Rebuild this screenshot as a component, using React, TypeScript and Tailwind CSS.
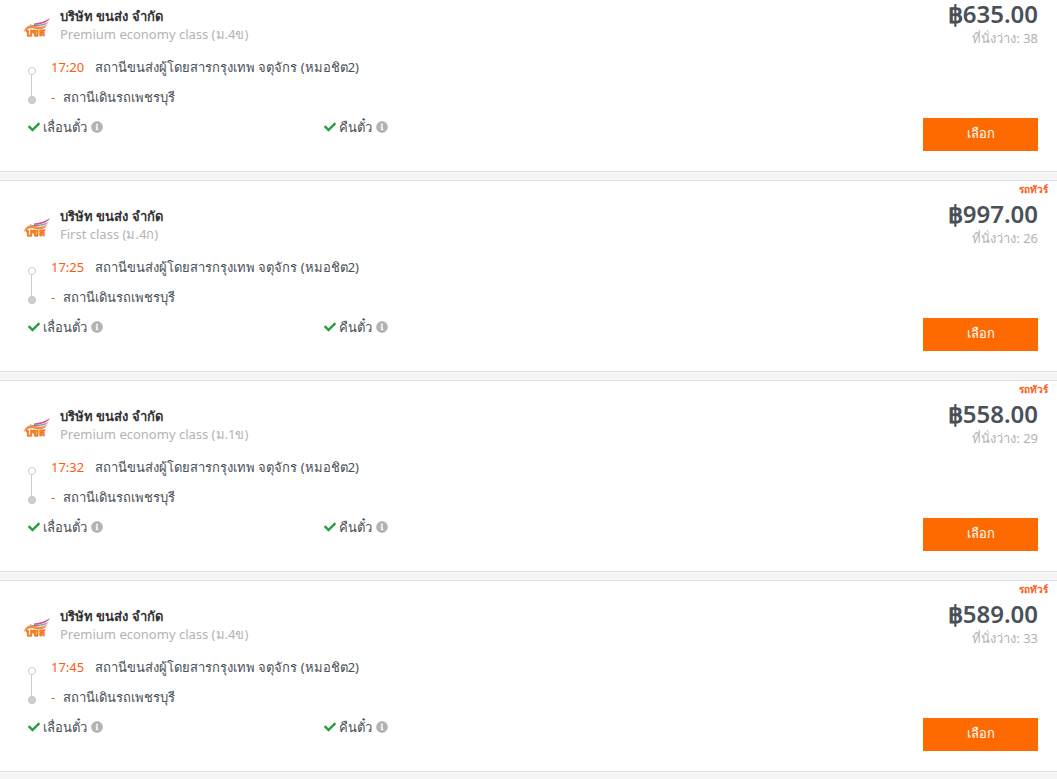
import { FaCheck, FaInfoCircle } from 'react-icons/fa'

type Trip = {
  departs: string
  busClass: string
  price: string
  seats: number
  tag?: string
}

const trips: Trip[] = [
  { departs: '17:20', busClass: 'Premium economy class (ม.4ข)', price: '฿635.00', seats: 38 },
  { departs: '17:25', busClass: 'First class (ม.4ก)', price: '฿997.00', seats: 26, tag: 'รถทัวร์' },
  { departs: '17:32', busClass: 'Premium economy class (ม.1ข)', price: '฿558.00', seats: 29, tag: 'รถทัวร์' },
  { departs: '17:45', busClass: 'Premium economy class (ม.4ข)', price: '฿589.00', seats: 33, tag: 'รถทัวร์' },
]

function OperatorLogo() {
  return (
    <svg viewBox="0 0 30 30" className="h-[30px] w-[30px] shrink-0 overflow-visible" aria-hidden="true">
      <path d="M12 16.5C18 16 24 14 28 11C26 15 21 17.500 12 18Z" fill="#dc4f93" />
      <path d="M8 17.500C15 19 22 17.500 27 14.500C24 19 16 20 8 18.500Z" fill="#6f95aa" />
      <path d="M9 19C16 20.500 21 20 26 17C23 22 15 22.500 9 19Z" fill="#f2845b" />
      <path d="M2 25C3 19 8 17 14 19C18 21 22 20.500 25 19.500C21 23 16 23 12 21.500C8 20.500 5 21.500 2 25Z" fill="#f68b3e" />
      <text
        x="4"
        y="29"
        fontSize="10"
        fontWeight="800"
        fill="#f57a1f"
        stroke="#f57a1f"
        strokeWidth="0.4"
      >
        บขส
      </text>
    </svg>
  )
}

function Perk({ label }: { label: string }) {
  return (
    <div className="flex w-[296px] items-center">
      <FaCheck className="mr-[3px] h-3 w-3 text-[#28a03c]" />
      <span>{label}</span>
      <FaInfoCircle className="ml-1 h-3 w-3 text-[#b3b3b3]" />
    </div>
  )
}

function TripCard({ trip }: { trip: Trip }) {
  return (
    <article className={`border-b border-[#dee2e6] bg-white ${trip.tag ? 'border-t' : ''}`}>
      {trip.tag && (
        <div className="pr-[9px] pb-[3px] text-right text-[10px] leading-4 font-semibold text-[#ff5a10]">{trip.tag}</div>
      )}
      <div className="flex pr-[19px] pb-5">
        <div className="min-w-0 flex-1 pt-[7px]">
          <div className="flex pl-[22px]">
            <OperatorLogo />
            <div className="ml-2 leading-[18px]">
              <h2 className="font-semibold text-[#333]">บริษัท ขนส่ง จำกัด</h2>
              <p className="text-[#b3b3b3]">{trip.busClass}</p>
            </div>
          </div>
          <div className="mt-[9px] flex pl-[27px]">
            <div className="mt-[15px] mr-[15px] flex w-[9px] flex-col items-center">
              <span className="h-2 w-2 rounded-full border border-[#ccc]" />
              <span className="h-[21px] w-px bg-[#ccc]" />
              <span className="h-2 w-2 rounded-full bg-[#ccc]" />
            </div>
            <div className="leading-[30px]">
              <div className="flex gap-2">
                <time className="w-9 text-[#ff5a10]">{trip.departs}</time>
                <span>สถานีขนส่งผู้โดยสารกรุงเทพ จตุจักร (หมอชิต2)</span>
              </div>
              <div className="flex gap-2">
                <span className="text-[#ff5a10]">-</span>
                <span>สถานีเดินรถเพชรบุรี</span>
              </div>
            </div>
          </div>
          <div className="flex pl-7 leading-[30px]">
            <Perk label="เลื่อนตั๋ว" />
            <Perk label="คืนตั๋ว" />
          </div>
        </div>
        <div className="flex flex-col items-end">
          <div className="text-2xl leading-7 font-semibold">{trip.price}</div>
          <div className="leading-5 text-[#b3b3b3]">ที่นั่งว่าง: {trip.seats}</div>
          <button type="button" className="mt-[70px] h-[33px] w-[115px] bg-[#ff6a00] pb-0.5 text-white">
            เลือก
          </button>
        </div>
      </div>
    </article>
  )
}

export default function App() {
  return (
    <main className="flex flex-col gap-2 bg-[#f5f5f5] pb-2 font-['Noto_Sans',sans-serif] text-[13px] text-[#495057]">
      {trips.map((trip) => (
        <TripCard key={trip.departs} trip={trip} />
      ))}
    </main>
  )
}
